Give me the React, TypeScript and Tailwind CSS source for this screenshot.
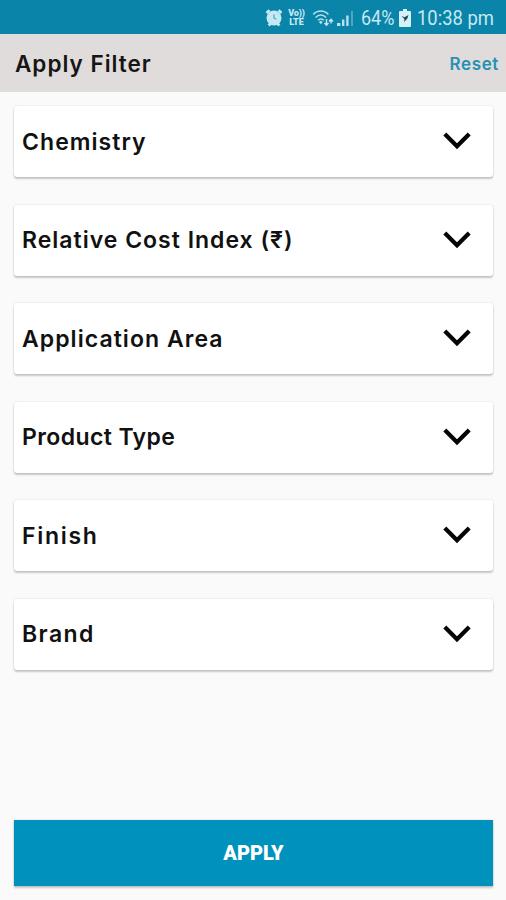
const filters = [
  { label: "Chemistry", tracking: "tracking-[1.05px]" },
  { label: "Relative Cost Index (₹)", tracking: "tracking-[1px]" },
  { label: "Application Area", tracking: "tracking-[1.05px]" },
  { label: "Product Type", tracking: "tracking-[0.4px]" },
  { label: "Finish", tracking: "tracking-[1.7px]" },
  { label: "Brand", tracking: "tracking-[1.4px]" },
];

const AlarmIcon = () => (
  <svg width="18" height="18" viewBox="0 0 18 18" fill="none">
    <path d="M1.5 4 4.5 1.2M16.5 4l-3-2.8M3.6 16.4l2-2M14.4 16.4l-2-2" stroke="#c5e9f3" strokeWidth="2.8" />
    <circle cx="9" cy="9" r="7.5" fill="#c5e9f3" />
    <path d="M9 5.5v3.7l2.4 1" stroke="#4aa4c0" strokeWidth="1.2" />
  </svg>
);

const WifiIcon = () => (
  <svg width="23" height="18" viewBox="0 0 23 18" fill="none">
    <path d="M1.2 5.4c4.2-4.6 11-4.6 15.2 0M3.6 8.4c3-3.2 7.4-3.2 10.4 0M6 11.3c1.8-1.8 4-1.8 5.8 0" stroke="#b5e0ed" strokeWidth="1.5" />
    <path d="m6.8 13 2-1.2 2 1.2-2 2.3z" fill="#b5e0ed" />
    <path d="M14.5 10v6m-2-2 2 2.2 2-2.2M19 14.5v-4m-2 2 2-2.2 2 2.2" stroke="#c5e9f3" strokeWidth="1.4" />
  </svg>
);

const SignalIcon = () => (
  <svg width="17" height="18" viewBox="0 0 17 18">
    <path d="M0 14h3.4v3H0zM5 10.5h2.4V17H5zM9.2 6.5h2.4V17H9.2z" fill="#b5e0ed" />
    <path d="M14.2 2h1.6v15h-1.6z" fill="#5fb2cc" />
  </svg>
);

const BatteryIcon = () => (
  <svg width="12" height="18" viewBox="0 0 12 18">
    <path d="M4 0h4v2h3q1 0 1 1v14q0 1-1 1H1q-1 0-1-1V3q0-1 1-1h3z" fill="#d5f0f6" />
    <path d="m2.5 7 3 1.2L9.5 6 8.3 9.5 5.2 13 5.4 10z" fill="#17475a" />
  </svg>
);

const Chevron = () => (
  <svg width="28" height="18" viewBox="0 0 28 18" fill="none" className="mb-[1px]">
    <path d="M1.8 2 14 14.2 26.2 2" stroke="#050505" strokeWidth="4.2" />
  </svg>
);

const App = () => {
  return (
    <main className="flex h-[900px] w-[506px] flex-col overflow-hidden bg-[#fafafa] font-['Roboto',sans-serif]">
      <div className="flex h-[34px] shrink-0 items-center bg-[#0a84a8] pt-0.5 pl-[265px] text-[#c5e9f3]">
        <AlarmIcon />
        <div className="ml-1 w-[19px] text-center text-[9px] leading-[9px] font-black">
          <p className="h-[9px] tracking-[-0.2px]">Vo))</p>
          <p className="h-[9px]">LTE</p>
        </div>
        <div className="ml-[6px] flex items-center gap-[2px]">
          <WifiIcon />
          <SignalIcon />
        </div>
        <span className="ml-[7px] w-[33px] text-[20px] whitespace-nowrap">
          <span className="inline-block origin-left scale-x-[0.9]">64%</span>
        </span>
        <div className="ml-[5px]">
          <BatteryIcon />
        </div>
        <span className="ml-[6px] w-[78px] text-[20px] whitespace-nowrap">
          <span className="inline-block origin-left scale-x-[0.92]">10:38 pm</span>
        </span>
      </div>
      <header className="flex h-[58px] shrink-0 items-center justify-between bg-[#e0dcdb] pr-[7px] pl-[15px]">
        <h1 className="pt-[2px] font-['Inter'] text-[22.5px] font-semibold tracking-[1px] text-[#151515]">Apply Filter</h1>
        <button className="pt-[3px] font-['Inter'] text-[17px] font-semibold tracking-[0.65px] text-[#2591b3]">Reset</button>
      </header>
      <section className="mt-[14px] flex flex-col gap-[27.5px] pr-[13px] pl-[14px]">
        {filters.map(({ label, tracking }) => (
          <button
            key={label}
            className="flex h-[71px] items-center justify-between rounded-[3px] bg-white pr-[22px] pl-2 shadow-[0_2px_2px_rgba(0,0,0,0.2),0_0_2px_rgba(0,0,0,0.14)]"
          >
            <span className={`pt-px font-['Inter'] text-[23px] font-semibold whitespace-nowrap text-[#111] ${tracking}`}>{label}</span>
            <Chevron />
          </button>
        ))}
      </section>
      <button className="mt-auto mr-[13px] mb-[14px] ml-[14px] h-[66px] shrink-0 bg-[#0092bd] text-[20px] font-black text-white shadow-[0_2px_2px_rgba(0,0,0,0.2),0_0_2px_rgba(0,0,0,0.15)]">
        APPLY
      </button>
    </main>
  );
};

export default App;
